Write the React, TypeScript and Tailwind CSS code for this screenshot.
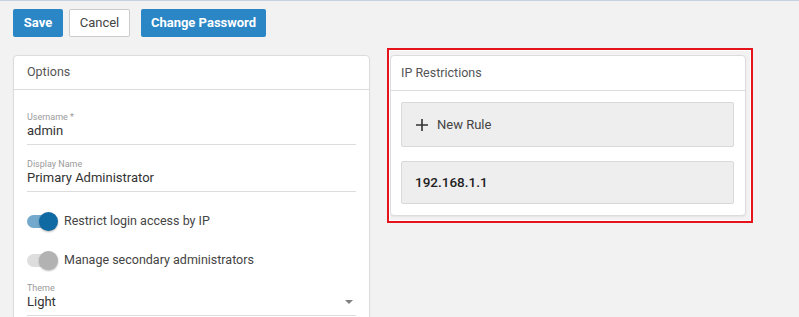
import React from "react";

function Toggle({ on }: { on: boolean }) {
  return (
    <div className="relative w-[31px] h-[19px] flex items-center shrink-0">
      <div
        className={`w-[30px] h-[13px] rounded-full ${
          on ? "bg-[#72a9cc]" : "bg-[#dedede]"
        }`}
      />
      <div
        className={`absolute right-0 top-0 w-[19px] h-[19px] rounded-full shadow-[0_1px_2px_rgba(0,0,0,0.3)] ${
          on ? "bg-[#0f69a3]" : "bg-[#b2b2b2]"
        }`}
      />
    </div>
  );
}

function Field({
  label,
  value,
  className = "",
  select = false,
}: {
  label: string;
  value: string;
  className?: string;
  select?: boolean;
}) {
  return (
    <div className={`border-b border-[#dcdcdc] pb-[4px] ${className}`}>
      <div className="text-[9px] leading-[10px] text-[#9a9a9a]">{label}</div>
      <div className="flex items-center justify-between">
        <span className="text-[13px] leading-[18px] text-[#333]">{value}</span>
        {select && (
          <svg width="8" height="5" viewBox="0 0 8 5" className="mr-[3px]">
            <path d="M0 0 L8 0 L4 4 Z" fill="#808080" />
          </svg>
        )}
      </div>
    </div>
  );
}

export default function App() {
  return (
    <div
      className="w-[799px] h-[317px] overflow-hidden bg-[#f2f2f2] border-t border-[#c5d0e0]"
      style={{ fontFamily: "Roboto, 'Liberation Sans', sans-serif" }}
    >
      {/* Toolbar */}
      <div className="flex items-center px-[13px] pt-[8px]">
        <button className="h-[28px] w-[50px] rounded-[2px] bg-[#2b86c5] text-white text-[13px] font-bold">
          Save
        </button>
        <button className="ml-[6px] h-[28px] w-[61px] rounded-[2px] bg-white border border-[#cccccc] text-[#444] text-[13px]">
          Cancel
        </button>
        <button className="ml-[11px] h-[28px] w-[125px] rounded-[2px] bg-[#2b86c5] text-white text-[13px] font-bold">
          Change Password
        </button>
      </div>

      <div className="flex items-start px-[13px] mt-[18px] gap-[20px]">
        {/* Options */}
        <div className="w-[357px] h-[300px] bg-white border border-[#dcdcdc] rounded-[4px] shadow-[0_1px_2px_rgba(0,0,0,0.06)]">
          <div className="h-[34px] flex items-center px-[13px] border-b border-[#dcdcdc] text-[12.5px] text-[#555]">
            Options
          </div>
          <div className="px-[13px] pt-[22px]">
            <Field label="Username *" value="admin" />
            <Field label="Display Name" value="Primary Administrator" className="mt-[14px]" />
            <div className="mt-[14px] h-[30px] flex items-center gap-[6px]">
              <Toggle on />
              <span className="text-[12.5px] text-[#444]">Restrict login access by IP</span>
            </div>
            <div className="mt-[9px] h-[30px] flex items-center gap-[6px]">
              <Toggle on={false} />
              <span className="text-[12.5px] text-[#444]">Manage secondary administrators</span>
            </div>
            <Field label="Theme" value="Light" className="mt-[8px]" select />
          </div>
        </div>

        {/* IP Restrictions */}
        <div className="relative w-[356px]">
          <div className="bg-white border border-[#dcdcdc] rounded-[4px] shadow-[0_1px_2px_rgba(0,0,0,0.06)]">
            <div className="h-[35px] flex items-center px-[10px] border-b border-[#dcdcdc] text-[12.5px] text-[#555]">
              IP Restrictions
            </div>
            <div className="pl-[10px] pr-[11px] pt-[11px] pb-[11px] flex flex-col gap-[14px]">
              <div className="h-[45px] flex items-center pl-[14px] bg-[#eeeeee] border border-[#d9d9d9] rounded-[2px]">
                <svg width="12" height="12" viewBox="0 0 12 12">
                  <path d="M6 0 V12 M0 6 H12" stroke="#333" strokeWidth="1.6" />
                </svg>
                <span className="ml-[9px] text-[13px] text-[#444]">New Rule</span>
              </div>
              <div className="h-[43px] flex items-center pl-[13px] bg-[#eeeeee] border border-[#d9d9d9] rounded-[2px]">
                <span className="text-[13.5px] font-medium text-[#222]">192.168.1.1</span>
              </div>
            </div>
          </div>
          {/* annotation frame */}
          <div className="absolute -left-[3px] -top-[7px] -right-[7px] -bottom-[7px] border-2 border-[#e5131c] shadow-[inset_0_0_0_1px_#ffffff] pointer-events-none" />
        </div>
      </div>
    </div>
  );
}
